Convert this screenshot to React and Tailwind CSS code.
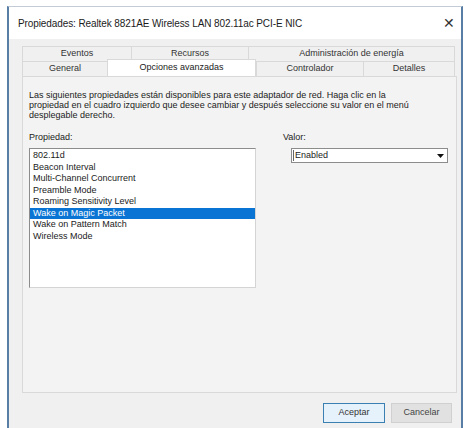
const font = { fontFamily: '"Liberation Sans", Arial, sans-serif' }

const topTabs = [
  ['Eventos', 'w-[110px]'],
  ['Recursos', 'w-[118px]'],
  ['Administración de energía', 'w-[207px]'],
]

const bottomTabs = [
  ['General', 'w-[86px]', false],
  ['Opciones avanzadas', 'w-[149px]', true],
  ['Controlador', 'w-[108px]', false],
  ['Detalles', 'w-[92px]', false],
]

const properties = [
  '802.11d',
  'Beacon Interval',
  'Multi-Channel Concurrent',
  'Preamble Mode',
  'Roaming Sensitivity Level',
  'Wake on Magic Packet',
  'Wake on Pattern Match',
  'Wireless Mode',
]

export default function App() {
  const selected = 'Wake on Magic Packet'

  return (
    <div className="w-[467px] h-[428px] bg-white pt-[6px] pl-[7px] overflow-hidden text-[#1b1b1b]" style={font}>
      <div className="w-[456px] h-[430px] flex flex-col bg-[#f0f0f0] border-t border-t-[#c3ccd6] border-x-2 border-x-[#587ea6]">
        {/* title bar */}
        <div className="h-[32px] bg-white flex items-center justify-between pl-[9px] pr-[6px]">
          <span className="text-[10px] tracking-[-0.1px]">Propiedades: Realtek 8821AE Wireless LAN 802.11ac PCI-E NIC</span>
          <span className="text-[14px] leading-none text-[#333] font-light">✕</span>
        </div>

        {/* tabs */}
        <div className="ml-[13px] mt-[7px] w-[435px] flex flex-col">
          <div className="flex h-[15px]">
            {topTabs.map(([label, w]) => (
              <div
                key={label}
                className={`${w} flex items-center justify-center border-t border-l border-r border-[#d9d9d9] -mr-px text-[9px] text-[#333]`}
              >
                {label}
              </div>
            ))}
          </div>
          <div className="flex h-[15px] relative z-10">
            {bottomTabs.map(([label, w, active]) => (
              <div
                key={label}
                className={
                  active
                    ? `${w} h-[17px] -mt-[2px] flex items-center justify-center bg-white border-t border-x border-[#d9d9d9] text-[9px] text-[#222]`
                    : `${w} flex items-center justify-center border-t border-l border-r border-[#d9d9d9] -mr-px text-[9px] text-[#333]`
                }
              >
                {label}
              </div>
            ))}
          </div>

          {/* panel */}
          <div className="h-[317px] border border-[#d9d9d9] bg-[#f3f3f3] pl-[6px] pt-[13px]">
            <p className="text-[9px] leading-[10px] whitespace-nowrap">
              Las siguientes propiedades están disponibles para este adaptador de red. Haga clic en la
              <br />
              propiedad en el cuadro izquierdo que desee cambiar y después seleccione su valor en el menú
              <br />
              desplegable derecho.
            </p>

            <div className="flex mt-[12px]">
              <div className="w-[227px] flex flex-col">
                <span className="text-[9px] leading-[10px]">Propiedad:</span>
                <div className="mt-[6px] h-[140px] bg-white border border-[#8c8c8c] border-b-[#d4d4d4] border-r-[#d4d4d4] pt-px">
                  {properties.map(p => (
                    <div
                      key={p}
                      className={`h-[11.5px] leading-[11.5px] pl-[3px] text-[9px] whitespace-nowrap ${
                        p === selected ? 'bg-[#0a74d4] text-white' : ''
                      }`}
                    >
                      {p}
                    </div>
                  ))}
                </div>
              </div>

              <div className="ml-[27px] flex flex-col">
                <span className="text-[9px] leading-[10px]">Valor:</span>
                <div className="ml-[8px] mt-[6px] w-[157px] h-[15px] bg-white border border-[#8c8c8c] flex items-center justify-between pr-[3px]">
                  <span className="ml-px h-[11px] pl-[1px] border-l border-[#666] text-[9px] leading-[11px]">Enabled</span>
                  <svg width="7" height="4" viewBox="0 0 7 4">
                    <path d="M0 0h7L3.5 4z" fill="#111" />
                  </svg>
                </div>
              </div>
            </div>
          </div>
        </div>

        {/* buttons */}
        <div className="flex justify-end gap-[6px] mt-[10px] pr-[9px]">
          <button className="w-[62px] h-[20px] bg-[#e5f1fb] border border-[#3c7fb1] text-[9px] text-[#333]">Aceptar</button>
          <button className="w-[61px] h-[20px] bg-[#e1e1e1] border border-[#d0d0d0] text-[9px] text-[#444]">Cancelar</button>
        </div>
      </div>
    </div>
  )
}
